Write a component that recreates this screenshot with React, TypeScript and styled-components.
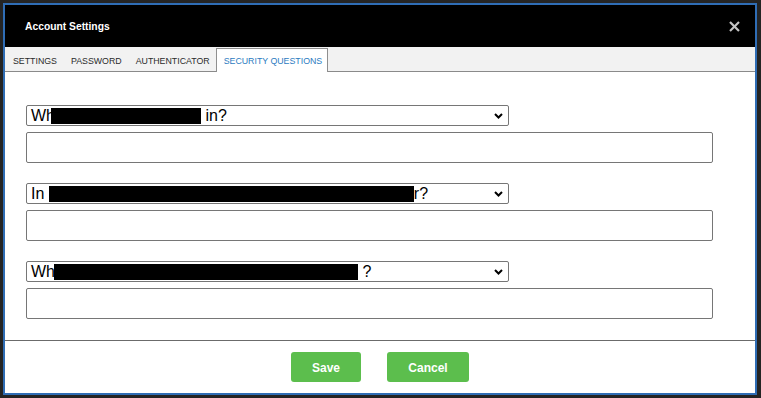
import React from "react";
import styled, { createGlobalStyle } from "styled-components";

const GlobalStyle = createGlobalStyle`
  html, body {
    margin: 0;
    padding: 0;
    background: #242424;
    font-family: "Liberation Sans", Arial, sans-serif;
  }
  * { box-sizing: border-box; }
`;

const Page = styled.div`
  padding: 3px 4px 3px 3px;
  width: 761px;
  height: 398px;
`;

const Modal = styled.div`
  width: 754px;
  height: 392px;
  border: 2px solid #2f6db5;
  background: #ffffff;
  display: flex;
  flex-direction: column;
`;

const Header = styled.div`
  height: 42px;
  flex: none;
  background: #000000;
  display: flex;
  align-items: center;
  justify-content: space-between;
  padding: 0 15px 0 20px;
`;

const Title = styled.div`
  color: #ffffff;
  font-size: 10.3px;
  font-weight: bold;
`;

const CloseButton = styled.button`
  width: 12px;
  height: 12px;
  padding: 0;
  border: none;
  background: transparent;
  display: flex;
  align-items: center;
  justify-content: center;
  cursor: pointer;
`;

const TabBar = styled.div`
  height: 25px;
  flex: none;
  background: #f2f2f2;
  border-bottom: 1px solid #8a8a8a;
  padding-top: 1px;
  display: flex;
  align-items: flex-start;
`;

const Tab = styled.div<{ $active?: boolean }>`
  height: 24px;
  padding: 1px 5px 0 7px;
  border: 1px solid ${(p) => (p.$active ? "#8f8f8f" : "transparent")};
  border-bottom: none;
  background: ${(p) => (p.$active ? "#ffffff" : "transparent")};
  color: ${(p) => (p.$active ? "#2b7bbf" : "#2a2a2a")};
  font-size: 8.8px;
  display: flex;
  align-items: center;
  white-space: nowrap;
`;

const Content = styled.div`
  flex: 1;
  padding: 33px 42px 21px 21px;
  display: flex;
  flex-direction: column;
  gap: 20px;
`;

const Group = styled.div`
  display: flex;
  flex-direction: column;
  gap: 6px;
`;

const SelectBox = styled.div`
  width: 483px;
  height: 21px;
  border: 1px solid #767676;
  border-radius: 2px;
  padding: 0 5px 0 4px;
  display: flex;
  align-items: center;
  justify-content: space-between;
  background: #ffffff;
  color: #000000;
  font-size: 16px;
  line-height: 19px;
`;

const SelectText = styled.span`
  display: flex;
  align-items: center;
  white-space: pre;
`;

const Redacted = styled.span<{ $w: number; $overlap?: number }>`
  position: relative;
  display: inline-block;
  width: ${(p) => p.$w}px;
  height: 16px;
  background: #000000;
  margin-left: ${(p) => -(p.$overlap ?? 0)}px;
`;

const AnswerInput = styled.input`
  width: 100%;
  height: 31px;
  border: 1px solid #767676;
  border-radius: 2px;
  padding: 0 6px;
  font-size: 13px;
  font-family: "Liberation Sans", Arial, sans-serif;
  outline: none;
`;

const Footer = styled.div`
  flex: none;
  border-top: 1px solid #6b6b6b;
  padding: 11px 0 12px;
  display: flex;
  justify-content: center;
  gap: 26px;
`;

const ActionButton = styled.button<{ $w: number }>`
  width: ${(p) => p.$w}px;
  height: 30px;
  border: none;
  border-radius: 3px;
  background: #5cbe4d;
  color: #ffffff;
  font-family: "Liberation Sans", Arial, sans-serif;
  font-weight: bold;
  font-size: 12px;
  padding-top: 2px;
  cursor: pointer;
`;

const Chevron = () => (
  <svg width="9" height="6" viewBox="0 0 9 6">
    <polyline points="1,1 4.5,4.5 8,1" fill="none" stroke="#000" strokeWidth="2" />
  </svg>
);

const CloseIcon = () => (
  <svg width="11" height="11" viewBox="0 0 11 11">
    <line x1="1" y1="1" x2="10" y2="10" stroke="#c4c4c4" strokeWidth="2.2" />
    <line x1="10" y1="1" x2="1" y2="10" stroke="#c4c4c4" strokeWidth="2.2" />
  </svg>
);

const questions = [
  { before: "Wh", w: 150, overlap: 4, after: " in?" },
  { before: "In ", w: 365, overlap: 0, after: "r?" },
  { before: "Wh", w: 304, overlap: 1, after: " ?" },
];

export default function App() {
  return (
    <>
      <GlobalStyle />
      <Page>
        <Modal>
          <Header>
            <Title>Account Settings</Title>
            <CloseButton aria-label="Close">
              <CloseIcon />
            </CloseButton>
          </Header>
          <TabBar>
            <Tab>SETTINGS</Tab>
            <Tab>PASSWORD</Tab>
            <Tab>AUTHENTICATOR</Tab>
            <Tab $active>SECURITY QUESTIONS</Tab>
          </TabBar>
          <Content>
            {questions.map((q, i) => (
              <Group key={i}>
                <SelectBox role="combobox">
                  <SelectText>
                    {q.before}
                    <Redacted $w={q.w} $overlap={q.overlap} />
                    {q.after}
                  </SelectText>
                  <Chevron />
                </SelectBox>
                <AnswerInput type="text" />
              </Group>
            ))}
          </Content>
          <Footer>
            <ActionButton $w={70}>Save</ActionButton>
            <ActionButton $w={82}>Cancel</ActionButton>
          </Footer>
        </Modal>
      </Page>
    </>
  );
}
